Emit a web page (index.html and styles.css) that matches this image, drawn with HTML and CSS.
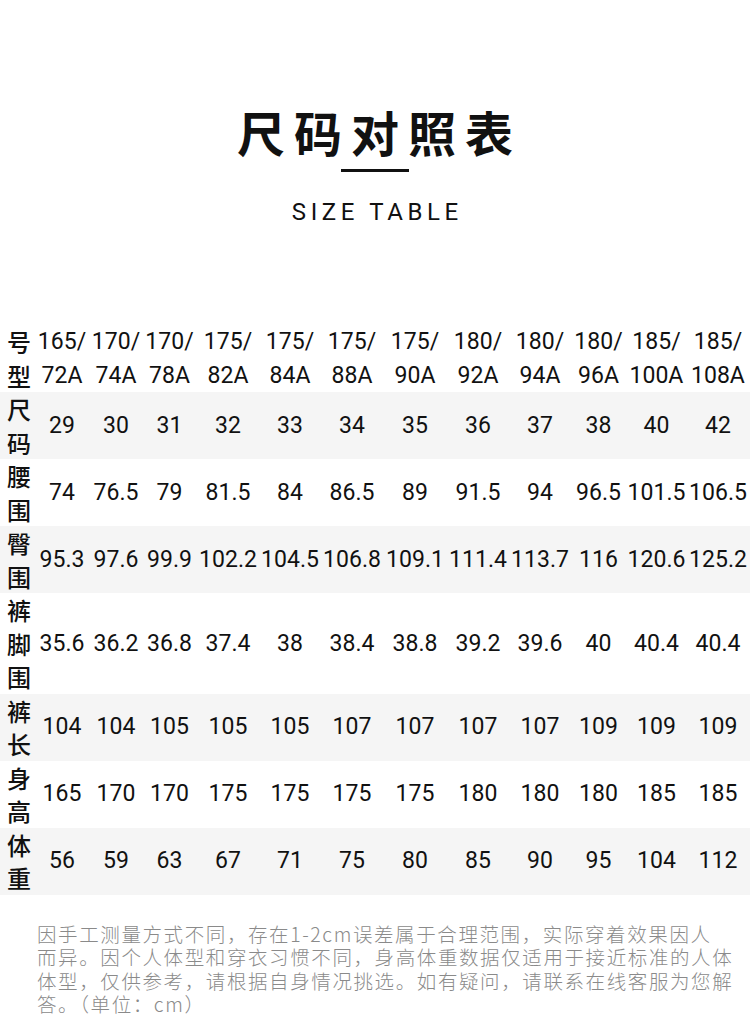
FILE: index.html
```html
<!DOCTYPE html>
<html lang="zh">
<head>
<meta charset="utf-8">
<link rel="stylesheet" href="styles.css">
</head>
<body>
<header class="head">
  <h1 class="title">尺码对照表</h1>
  <div class="rule"></div>
  <p class="subtitle">SIZE TABLE</p>
</header>
<table class="sizes">
  <colgroup>
    <col><col><col><col><col><col><col><col><col><col><col><col><col>
  </colgroup>
  <tbody>
    <tr>
      <th>号<br>型</th>
      <td>165/<br>72A</td><td>170/<br>74A</td><td>170/<br>78A</td><td>175/<br>82A</td><td>175/<br>84A</td><td>175/<br>88A</td><td>175/<br>90A</td><td>180/<br>92A</td><td>180/<br>94A</td><td>180/<br>96A</td><td>185/<br>100A</td><td>185/<br>108A</td>
    </tr>
    <tr class="alt">
      <th>尺<br>码</th>
      <td>29</td><td>30</td><td>31</td><td>32</td><td>33</td><td>34</td><td>35</td><td>36</td><td>37</td><td>38</td><td>40</td><td>42</td>
    </tr>
    <tr>
      <th>腰<br>围</th>
      <td>74</td><td>76.5</td><td>79</td><td>81.5</td><td>84</td><td>86.5</td><td>89</td><td>91.5</td><td>94</td><td>96.5</td><td>101.5</td><td>106.5</td>
    </tr>
    <tr class="alt">
      <th>臀<br>围</th>
      <td>95.3</td><td>97.6</td><td>99.9</td><td>102.2</td><td>104.5</td><td>106.8</td><td>109.1</td><td>111.4</td><td>113.7</td><td>116</td><td>120.6</td><td>125.2</td>
    </tr>
    <tr>
      <th>裤<br>脚<br>围</th>
      <td>35.6</td><td>36.2</td><td>36.8</td><td>37.4</td><td>38</td><td>38.4</td><td>38.8</td><td>39.2</td><td>39.6</td><td>40</td><td>40.4</td><td>40.4</td>
    </tr>
    <tr class="alt">
      <th>裤<br>长</th>
      <td>104</td><td>104</td><td>105</td><td>105</td><td>105</td><td>107</td><td>107</td><td>107</td><td>107</td><td>109</td><td>109</td><td>109</td>
    </tr>
    <tr>
      <th>身<br>高</th>
      <td>165</td><td>170</td><td>170</td><td>175</td><td>175</td><td>175</td><td>175</td><td>180</td><td>180</td><td>180</td><td>185</td><td>185</td>
    </tr>
    <tr class="alt">
      <th>体<br>重</th>
      <td>56</td><td>59</td><td>63</td><td>67</td><td>71</td><td>75</td><td>80</td><td>85</td><td>90</td><td>95</td><td>104</td><td>112</td>
    </tr>
  </tbody>
</table>
<p class="note">因手工测量方式不同，存在1-2cm误差属于合理范围，实际穿着效果因人<br>而异。因个人体型和穿衣习惯不同，身高体重数据仅适用于接近标准的人体<br>体型，仅供参考，请根据自身情况挑选。如有疑问，请联系在线客服为您解<br>答。（单位：cm）</p>
</body>
</html>
```

FILE: styles.css
```css
html, body {
  margin: 0;
  padding: 0;
  background: #ffffff;
}

body {
  width: 750px;
  font-family: "Noto Sans CJK SC", "Noto Sans", sans-serif;
  color: #111111;
}

.head {
  display: flex;
  flex-direction: column;
  align-items: center;
  padding-top: 101px;
}

.title {
  margin: 0;
  font-size: 48px;
  font-weight: 700;
  line-height: 60px;
  letter-spacing: 9px;
  text-indent: 9px;
  color: #111111;
}

.rule {
  width: 68px;
  height: 3px;
  background: #111111;
  margin-top: 8px;
}

.subtitle {
  margin: 25px 0 0 0;
  font-family: Roboto, "Noto Sans", sans-serif;
  font-size: 24px;
  line-height: 30px;
  letter-spacing: 4.6px;
  text-indent: 4.6px;
  color: #111111;
}

.sizes {
  margin-top: 98px;
  width: 750px;
  table-layout: fixed;
  border-collapse: collapse;
  border-spacing: 0;
}

.sizes col:nth-child(1) { width: 35px; }
.sizes col:nth-child(2) { width: 54px; }
.sizes col:nth-child(3) { width: 54px; }
.sizes col:nth-child(4) { width: 53px; }
.sizes col:nth-child(5) { width: 64px; }
.sizes col:nth-child(6) { width: 60px; }
.sizes col:nth-child(7) { width: 64px; }
.sizes col:nth-child(8) { width: 62px; }
.sizes col:nth-child(9) { width: 64px; }
.sizes col:nth-child(10) { width: 60px; }
.sizes col:nth-child(11) { width: 57px; }
.sizes col:nth-child(12) { width: 59px; }
.sizes col:nth-child(13) { width: 64px; }

.sizes th,
.sizes td {
  padding: 0;
  line-height: 33.5px;
  vertical-align: middle;
  white-space: nowrap;
}

.sizes th {
  text-align: left;
  padding-left: 7px;
  font-family: "Noto Sans CJK SC", sans-serif;
  font-size: 24px;
  font-weight: 500;
}

.sizes td {
  text-align: center;
  font-family: Roboto, "Noto Sans", sans-serif;
  font-size: 23px;
  font-weight: 400;
}

.sizes tr.alt {
  background: #f5f5f5;
}

.note {
  margin: 27px 0 0 0;
  padding: 0 0 0 37px;
  font-size: 19.5px;
  letter-spacing: 1.6px;
  line-height: 23.5px;
  font-weight: 300;
  color: #8a8a8a;
  white-space: nowrap;
}
```
